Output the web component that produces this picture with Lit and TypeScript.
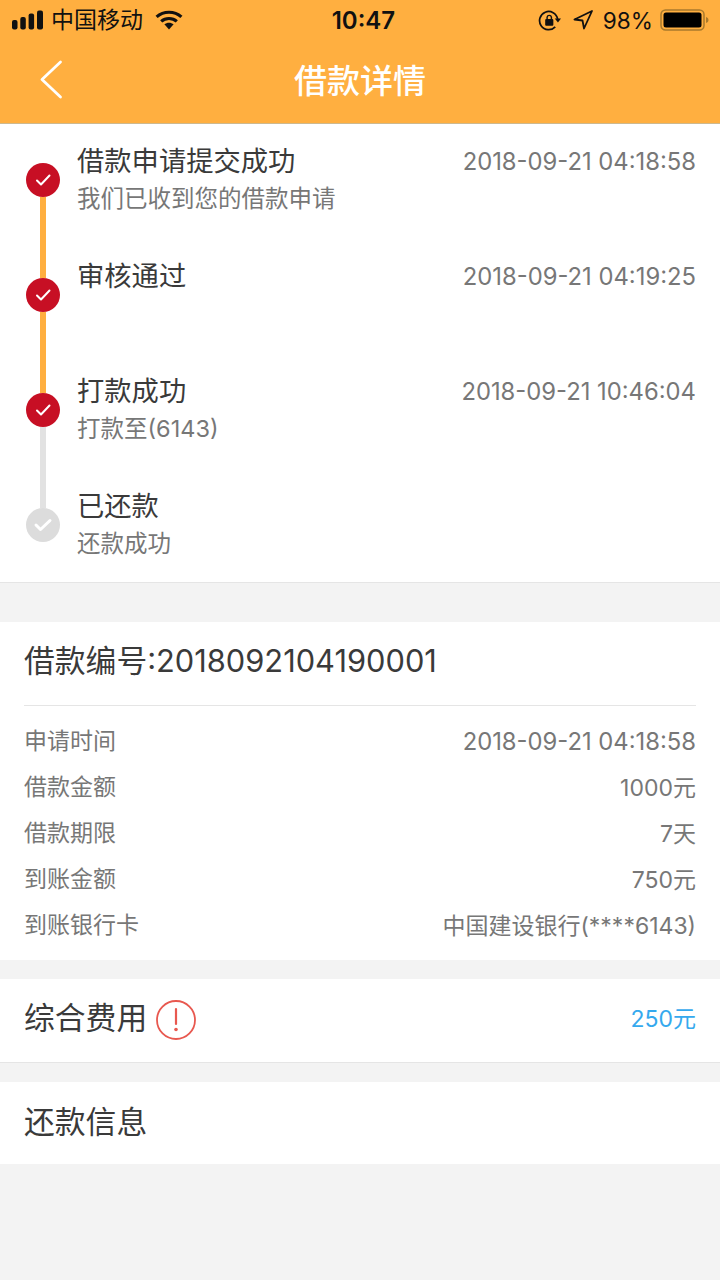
import { LitElement, css, html, nothing } from 'lit';
import { customElement } from 'lit/decorators.js';
import { map } from 'lit/directives/map.js';

type Step = {
  title: string;
  time?: string;
  note?: string;
  done: boolean;
  above?: 'on' | 'off';
  below?: 'on' | 'off';
};

const steps: Step[] = [
  { title: '借款申请提交成功', time: '2018-09-21 04:18:58', note: '我们已收到您的借款申请', done: true, below: 'on' },
  { title: '审核通过', time: '2018-09-21 04:19:25', done: true, above: 'on', below: 'on' },
  { title: '打款成功', time: '2018-09-21 10:46:04', note: '打款至(6143)', done: true, above: 'on', below: 'off' },
  { title: '已还款', note: '还款成功', done: false, above: 'off' },
];

const details = [
  ['申请时间', '2018-09-21 04:18:58'],
  ['借款金额', '1000元'],
  ['借款期限', '7天'],
  ['到账金额', '750元'],
  ['到账银行卡', '中国建设银行(****6143)'],
];

@customElement('app-root')
export class AppRoot extends LitElement {
  static styles = css`
    :host {
      display: block;
      width: 720px;
      height: 1280px;
      overflow: hidden;
      background: #f3f3f3;
      font-family: Inter, 'Noto Sans CJK SC', sans-serif;
      color: #3a3a3a;
    }

    .top {
      height: 123px;
      background: #ffaf40;
      border-bottom: 1px solid #cdb98f;
    }

    .status {
      height: 40px;
      display: flex;
      align-items: center;
      padding: 0 11px 0 12px;
      color: #111;
      font-size: 22.6px;
    }

    .carrier {
      margin-left: 7px;
      line-height: 40px;
      font-size: 23px;
    }

    .wifi {
      margin-left: 12px;
    }

    .clock {
      flex: 1;
      text-align: center;
      font-size: 24px;
      font-weight: 600;
      padding-left: 6px;
    }

    .rotation {
      margin-right: 12px;
    }

    .arrow {
      margin-right: 10px;
    }

    .battery {
      margin-left: 7px;
    }

    .nav {
      height: 83px;
      display: flex;
      align-items: center;
      justify-content: center;
      position: relative;
      color: #fff;
      font-size: 33px;
      font-weight: 500;
      padding-bottom: 6px;
      box-sizing: border-box;
    }

    .back {
      position: absolute;
      left: 38px;
      top: 19px;
    }

    .timeline {
      height: 439px;
      padding-top: 19px;
      background: #fff;
      border-bottom: 1px solid #e5e5e5;
    }

    .step {
      height: 115px;
      display: flex;
      padding: 0 24px 0 26px;
    }

    .rail {
      width: 34px;
      display: flex;
      flex-direction: column;
      align-items: center;
      margin-right: 17px;
    }

    .seg {
      width: 6px;
      background: transparent;
    }

    .seg.above {
      height: 20px;
    }

    .seg.below {
      flex: 1;
    }

    .seg.on {
      background: #ffaf40;
    }

    .seg.off {
      background: #e2e2e2;
    }

    .dot {
      width: 34px;
      height: 34px;
      flex: none;
      border-radius: 50%;
      background: #c70f24;
      display: flex;
      align-items: center;
      justify-content: center;
    }

    .dot.todo {
      background: #dcdcdc;
    }

    .body {
      flex: 1;
    }

    .head {
      display: flex;
      justify-content: space-between;
      align-items: center;
      height: 38px;
    }

    .title {
      font-size: 27.3px;
      padding-bottom: 6px;
    }

    .time {
      font-size: 23.8px;
      color: #777;
      padding-bottom: 2px;
    }

    .note {
      font-size: 23.5px;
      line-height: 36px;
      color: #777;
    }

    .info {
      margin-top: 39px;
      background: #fff;
      padding: 0 24px;
      height: 338px;
    }

    .info-title {
      height: 83px;
      display: flex;
      align-items: center;
      font-size: 30.8px;
      border-bottom: 1px solid #e5e5e5;
    }

    .info-title span {
      padding-bottom: 10px;
    }

    .rows {
      padding-top: 11px;
    }

    .row {
      height: 46px;
      display: flex;
      justify-content: space-between;
      align-items: center;
      font-size: 23px;
      color: #777;
    }

    .row .label {
      padding-bottom: 2px;
    }

    .row .date {
      font-size: 23.8px;
      padding-top: 2px;
    }

    .fee {
      margin-top: 19px;
      height: 83px;
      background: #fff;
      border-bottom: 1px solid #e5e5e5;
      display: flex;
      align-items: center;
      padding: 0 24px;
      font-size: 30.8px;
    }

    .fee-label {
      padding-bottom: 10px;
    }

    .alert {
      margin: 0 0 2px 9px;
    }

    .amount {
      margin-left: auto;
      font-size: 23px;
      color: #35a9ee;
      padding-bottom: 8px;
    }

    .repay {
      margin-top: 19px;
      height: 82px;
      background: #fff;
      display: flex;
      align-items: center;
      padding: 0 24px;
      font-size: 30.8px;
    }

    .repay span {
      padding-bottom: 8px;
    }
  `;

  private renderCheck(done: boolean) {
    if (!done) {
      return html`<svg width="20" height="16" viewBox="0 0 20 16">
        <path d="M3 8l4.500 4.500L17 3.500" fill="none" stroke="#fff" stroke-width="3" stroke-linecap="round" stroke-linejoin="round" />
      </svg>`;
    }
    return html`<svg width="18" height="14" viewBox="0 0 18 14">
      <path d="M3 7.500l4 4 8.500-9" fill="none" stroke="#fff" stroke-width="2" stroke-linecap="round" stroke-linejoin="round" />
    </svg>`;
  }

  private renderStatus() {
    return html`<div class="status">
      <svg width="32" height="20" viewBox="0 0 32 20">
        <rect x="0" y="10" width="5.500" height="9.500" rx="2" fill="#111" />
        <rect x="8.300" y="7" width="5.500" height="12.500" rx="2" fill="#111" />
        <rect x="16.600" y="3.500" width="5.500" height="16" rx="2" fill="#111" />
        <rect x="25" y="0.500" width="6" height="19" rx="2" fill="#111" />
      </svg>
      <span class="carrier">中国移动</span>
      <svg class="wifi" width="28" height="20" viewBox="0 0 28 20">
        <path d="M14 19.500l-4.600-5.200c2.500-2.200 6.700-2.200 9.200 0z" fill="#111" />
        <path d="M1.600 6.900c7-6.200 17.800-6.200 24.800 0M6.200 11.400c4.400-3.900 11.200-3.900 15.600 0" fill="none" stroke="#111" stroke-width="3.200" />
      </svg>
      <span class="clock">10:47</span>
      <svg class="rotation" width="23" height="23" viewBox="0 0 24 24">
        <path d="M20.500 10.500A9.500 9.500 0 1 0 18 18.700" fill="none" stroke="#111" stroke-width="1.800" />
        <path d="M17.500 10h6.500l-3.200 4z" fill="#111" />
        <rect x="7.500" y="10.500" width="8.500" height="7" rx="1" fill="#111" />
        <path d="M9.500 10.500V8.500a2.300 2.300 0 0 1 4.500 0v2" fill="none" stroke="#111" stroke-width="1.500" />
      </svg>
      <svg class="arrow" width="20" height="20" viewBox="0 0 20 20">
        <path d="M19 1L1.500 9.500l8 1 1.500 8z" fill="none" stroke="#111" stroke-width="1.800" stroke-linejoin="round" />
      </svg>
      <span>98%</span>
      <svg class="battery" width="49" height="22" viewBox="0 0 49 22">
        <rect x="1" y="1" width="43" height="20" rx="4.500" fill="none" stroke="#a97a2c" stroke-width="1.500" />
        <rect x="3.500" y="3.500" width="38" height="15" rx="2.500" fill="#000" />
        <path d="M46 8c1.500.3 2.500 1.500 2.500 3s-1 2.700-2.500 3z" fill="#a97a2c" />
      </svg>
    </div>`;
  }

  private renderStep(step: Step) {
    return html`<div class="step">
      <div class="rail">
        <div class="seg above ${step.above ?? ''}"></div>
        <div class="dot ${step.done ? '' : 'todo'}">${this.renderCheck(step.done)}</div>
        <div class="seg below ${step.below ?? ''}"></div>
      </div>
      <div class="body">
        <div class="head">
          <span class="title">${step.title}</span>
          ${step.time ? html`<span class="time">${step.time}</span>` : nothing}
        </div>
        ${step.note ? html`<div class="note">${step.note}</div>` : nothing}
      </div>
    </div>`;
  }

  render() {
    return html`
      <div class="top">
        ${this.renderStatus()}
        <div class="nav">
          <svg class="back" width="26" height="40" viewBox="0 0 26 40">
            <path d="M22.500 3L4 20.500 22.500 38" fill="none" stroke="#fff" stroke-width="2.800" stroke-linecap="round" stroke-linejoin="round" />
          </svg>
          借款详情
        </div>
      </div>
      <div class="timeline">${map(steps, (step) => this.renderStep(step))}</div>
      <div class="info">
        <div class="info-title"><span>借款编号:2018092104190001</span></div>
        <div class="rows">
          ${map(
            details,
            ([label, value]) => html`<div class="row">
              <span class="label">${label}</span>
              <span class=${value.startsWith('2018') ? 'date' : ''}>${value}</span>
            </div>`,
          )}
        </div>
      </div>
      <div class="fee">
        <span class="fee-label">综合费用</span>
        <svg class="alert" width="40" height="40" viewBox="0 0 40 40">
          <circle cx="20" cy="20" r="19" fill="none" stroke="#e8584f" stroke-width="1.800" />
          <path d="M20 9v15" stroke="#e8584f" stroke-width="2.200" stroke-linecap="round" />
          <circle cx="20" cy="29.500" r="1.800" fill="#e8584f" />
        </svg>
        <span class="amount">250元</span>
      </div>
      <div class="repay"><span>还款信息</span></div>
    `;
  }
}
